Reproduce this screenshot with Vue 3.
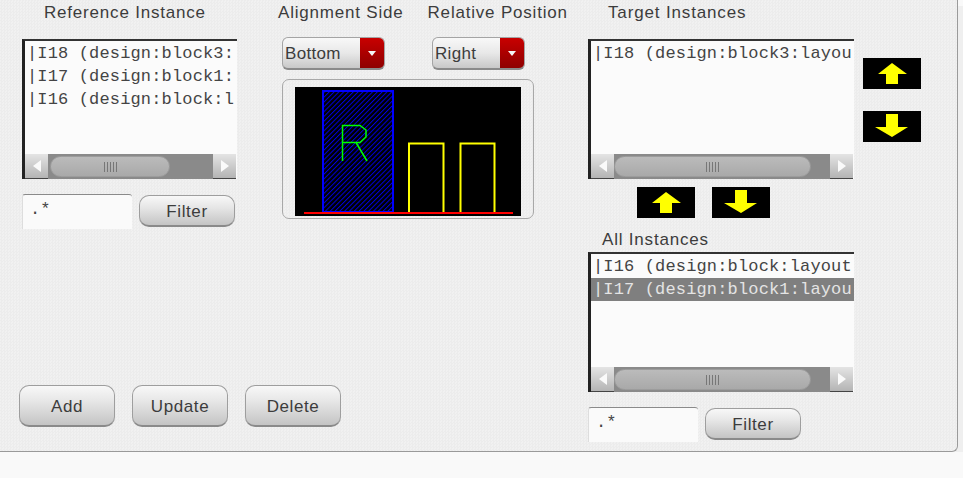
<template>
    <div class="panel">
        <div class="left-area">
            <div class="top-row">
                <div class="ref-col">
                    <div class="title ref-title">Reference Instance</div>
                    <div class="list-box ref-list">
                        <div class="rows">
                            <div v-for="row in refRows" :key="row" class="row">{{ row }}</div>
                        </div>
                        <div class="scrollbar">
                            <div class="sb-btn"><span class="tri-left"></span></div>
                            <div class="sb-track">
                                <div class="sb-thumb ref-thumb"><span class="grip"></span></div>
                            </div>
                            <div class="sb-btn"><span class="tri-right"></span></div>
                        </div>
                    </div>
                    <div class="filter-row">
                        <div class="filter-input">.*</div>
                        <button class="btn filter-btn">Filter</button>
                    </div>
                </div>

                <div class="mid-col">
                    <div class="mid-titles">
                        <div class="title">Alignment Side</div>
                        <div class="title">Relative Position</div>
                    </div>
                    <div class="selects">
                        <div class="select bottom-select">
                            <span class="select-text">Bottom</span>
                            <span class="select-arrow"><span class="tri-down"></span></span>
                        </div>
                        <div class="select right-select">
                            <span class="select-text">Right</span>
                            <span class="select-arrow"><span class="tri-down"></span></span>
                        </div>
                    </div>
                    <div class="preview">
                        <svg width="226" height="129" viewBox="0 0 226 129">
                            <defs>
                                <pattern id="hatch" width="3.4" height="3.4" patternUnits="userSpaceOnUse" patternTransform="rotate(45)">
                                    <line x1="0" y1="0" x2="0" y2="3.4" stroke="#0000e0" stroke-width="2" />
                                </pattern>
                            </defs>
                            <rect width="226" height="129" fill="#000" />
                            <rect x="28" y="4" width="70" height="121" fill="url(#hatch)" stroke="#0000ff" stroke-width="2" />
                            <path d="M47.5 74V38.5H65L71 43V50L65 55.5H47.5M61 55.5L72 74" fill="none" stroke="#00ff00" stroke-width="1.5" />
                            <path d="M114 125V56.5H148.5V125M165.5 125V56.5H199.5V125" fill="none" stroke="#ffff00" stroke-width="2" />
                            <rect x="9" y="125" width="209" height="2" fill="#ff0000" />
                        </svg>
                    </div>
                </div>
            </div>

            <div class="actions">
                <button class="btn">Add</button>
                <button class="btn">Update</button>
                <button class="btn">Delete</button>
            </div>
        </div>

        <div class="target-col">
            <div class="title target-title">Target Instances</div>
            <div class="target-top">
                <div class="list-box wide-list">
                    <div class="rows">
                        <div class="row">|I18 (design:block3:layou</div>
                    </div>
                    <div class="scrollbar">
                        <div class="sb-btn"><span class="tri-left"></span></div>
                        <div class="sb-track">
                            <div class="sb-thumb wide-thumb"><span class="grip"></span></div>
                        </div>
                        <div class="sb-btn"><span class="tri-right"></span></div>
                    </div>
                </div>
                <div class="side-arrows">
                    <button class="arrow-btn">
                        <svg width="58" height="31" viewBox="0 0 58 31"><path :d="upPath" fill="#ffff00" /></svg>
                    </button>
                    <button class="arrow-btn">
                        <svg width="58" height="31" viewBox="0 0 58 31"><path :d="downPath" fill="#ffff00" /></svg>
                    </button>
                </div>
            </div>
            <div class="under-arrows">
                <button class="arrow-btn">
                    <svg width="58" height="31" viewBox="0 0 58 31"><path :d="upPath" fill="#ffff00" /></svg>
                </button>
                <button class="arrow-btn">
                    <svg width="58" height="31" viewBox="0 0 58 31"><path :d="downPath" fill="#ffff00" /></svg>
                </button>
            </div>
            <div class="title all-title">All Instances</div>
            <div class="list-box wide-list">
                <div class="rows">
                    <div class="row">|I16 (design:block:layout</div>
                    <div class="row selected">|I17 (design:block1:layou</div>
                </div>
                <div class="scrollbar">
                    <div class="sb-btn"><span class="tri-left"></span></div>
                    <div class="sb-track">
                        <div class="sb-thumb wide-thumb"><span class="grip"></span></div>
                    </div>
                    <div class="sb-btn"><span class="tri-right"></span></div>
                </div>
            </div>
            <div class="filter-row">
                <div class="filter-input">.*</div>
                <button class="btn filter-btn">Filter</button>
            </div>
        </div>
    </div>
</template>

<script setup>
// the list is narrower than the names, only the visible part is kept
const refRows = [
    '|I18 (design:block3:',
    '|I17 (design:block1:',
    '|I16 (design:block:l',
];

// arrow shapes, same for the side and the under buttons
const upPath = 'M29 5L44 16H35V26H23V16H15Z';
const downPath = 'M23 3H35V16H45L29 26L12 16H23Z';
</script>

<style>
html,
body {
    background: #f9f9f9;
}
</style>

<style scoped>
.panel {
    display: flex;
    box-sizing: border-box;
    width: 958px;
    height: 452px;
    background: repeating-conic-gradient(#ececec 0 25%, #f1f1f1 0 50%) 0 0 / 3px 3px;
    border-right: 1px solid #9a9a9a;
    border-bottom: 1px solid #9a9a9a;
    border-bottom-right-radius: 6px;
    box-shadow: 5px 6px 0 #efefef;
    font-family: "Liberation Sans", Arial, sans-serif;
    color: #3c3c3c;
}

.title {
    font-size: 17px;
    line-height: 26px;
    letter-spacing: 0.8px;
    white-space: nowrap;
}

.left-area {
    display: flex;
    flex-direction: column;
    width: 588px;
    flex: none;
    padding-bottom: 24px;
    box-sizing: border-box;
}

.top-row {
    display: flex;
}

.ref-col {
    width: 282px;
    flex: none;
    padding-left: 22px;
    box-sizing: border-box;
}

.ref-title {
    margin-left: 22px;
}

.list-box {
    display: flex;
    flex-direction: column;
    box-sizing: border-box;
    background: #fbfbfb;
    border-left: 3px solid #222222;
    border-top: 2px solid #333333;
    overflow: hidden;
}

.ref-list {
    width: 215px;
    height: 140px;
    margin-top: 13px;
}

.wide-list {
    width: 266px;
    height: 140px;
}

.rows {
    flex: 1;
    min-height: 0;
    padding-top: 1px;
}

.row {
    height: 23px;
    padding-left: 2px;
    line-height: 23px;
    font-family: "Liberation Mono", "Courier New", monospace;
    font-size: 17px;
    letter-spacing: 0.15px;
    white-space: nowrap;
    color: #444444;
}

.row.selected {
    background: #7f7f7f;
    color: #e4e4e4;
}

.scrollbar {
    display: flex;
    height: 25px;
    flex: none;
    margin-right: 1px;
}

.sb-btn {
    display: flex;
    align-items: center;
    justify-content: center;
    width: 23px;
    flex: none;
    box-sizing: border-box;
    background: linear-gradient(#e4e4e4, #b4b4b4);
    border-bottom: 1px solid #444444;
}

.tri-left {
    border: 6px solid transparent;
    border-left: 0;
    border-right: 8px solid #fafafa;
}

.tri-right {
    border: 6px solid transparent;
    border-right: 0;
    border-left: 8px solid #fafafa;
}

.sb-track {
    flex: 1;
    display: flex;
    align-items: center;
    background: #8a8a8a;
}

.sb-thumb {
    display: flex;
    align-items: center;
    justify-content: center;
    height: 21px;
    border-radius: 11px;
    background: linear-gradient(#bbbbbb, #a9a9a9);
    border: 1px solid #9c9c9c;
    box-sizing: border-box;
}

.ref-thumb {
    width: 120px;
    margin-left: 2px;
}

.wide-thumb {
    width: 197px;
}

.grip {
    width: 13px;
    height: 10px;
    background: repeating-linear-gradient(90deg, #777777 0 1px, transparent 1px 3px);
}

.filter-row {
    display: flex;
    align-items: flex-start;
    margin-top: 15px;
}

.filter-input {
    box-sizing: border-box;
    width: 110px;
    height: 35px;
    padding: 4px 0 0 7px;
    background: #fafafa;
    border-top: 1px solid #8a8a8a;
    border-left: 1px solid #dddddd;
    border-radius: 3px 3px 0 0;
    font-family: "Liberation Mono", monospace;
    font-size: 17px;
    line-height: 22px;
    color: #444444;
}

.btn {
    width: 96px;
    height: 32px;
    padding: 2px 0 0;
    background: linear-gradient(#f8f8f8, #e6e6e6 40%, #c4c4c4);
    border: 1px solid #9e9e9e;
    border-bottom: 2px solid #8a8a8a;
    border-radius: 10px;
    font-family: "Liberation Sans", Arial, sans-serif;
    font-size: 17px;
    letter-spacing: 0.6px;
    color: #3c3c3c;
}

.filter-btn {
    margin-left: 7px;
    margin-top: 1px;
}

.mid-col {
    width: 252px;
    flex: none;
    box-sizing: border-box;
    margin-left: 0;
}

.mid-titles {
    display: flex;
    gap: 24px;
    margin-left: -4px;
}

.selects {
    display: flex;
    margin-top: 11px;
}

.select {
    display: flex;
    box-sizing: border-box;
    height: 33px;
    background: linear-gradient(#f8f8f8, #e8e8e8 50%, #c8c8c8);
    border: 1px solid #a4a4a4;
    border-bottom: 2px solid #8a8a8a;
    border-radius: 6px;
    overflow: hidden;
}

.bottom-select {
    width: 103px;
}

.right-select {
    width: 93px;
    margin-left: 47px;
}

.select-text {
    flex: 1;
    padding-left: 2px;
    font-size: 17px;
    line-height: 32px;
    letter-spacing: 0.3px;
}

.select-arrow {
    display: flex;
    align-items: center;
    justify-content: center;
    width: 24px;
    flex: none;
    background: linear-gradient(#c80000, #8e0000);
}

.tri-down {
    border: 4px solid transparent;
    border-bottom: 0;
    border-top: 5px solid #f4f4f4;
}

.preview {
    box-sizing: border-box;
    width: 252px;
    height: 140px;
    margin-top: 9px;
    padding: 7px 0 0 12px;
    border: 1px solid #a8a8a8;
    border-radius: 7px;
}

.preview svg {
    display: block;
}

.actions {
    display: flex;
    gap: 17px;
    margin-top: auto;
    padding-left: 19px;
}

.actions .btn {
    height: 42px;
}

.target-col {
    flex: 1;
}

.target-title {
    margin-left: 20px;
    letter-spacing: 0.85px;
}

.target-top {
    display: flex;
    margin-top: 13px;
}

.side-arrows {
    display: flex;
    flex-direction: column;
    gap: 22px;
    margin: 19px 0 0 9px;
}

.arrow-btn {
    display: block;
    width: 58px;
    height: 31px;
    padding: 0;
    border: 0;
    background: #000000;
}

.arrow-btn svg {
    display: block;
}

.under-arrows {
    display: flex;
    gap: 17px;
    margin: 8px 0 0 49px;
}

.all-title {
    margin: 10px 0 0 14px;
    line-height: 24px;
}
</style>
